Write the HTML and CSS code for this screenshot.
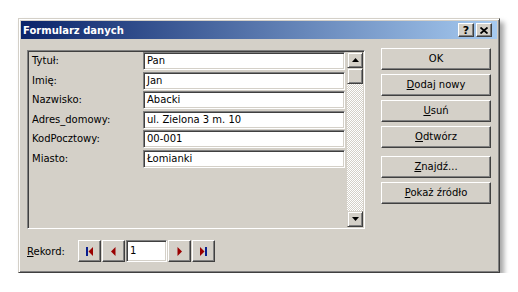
FILE: index.html
```html
<!DOCTYPE html>
<html lang="pl">
<head>
  <meta charset="UTF-8" />
  <title>Formularz danych</title>
  <link rel="stylesheet" href="styles.css">
</head>
<body>
  <div class="dialog">
    <div class="titlebar">
      <span class="title">Formularz danych</span>
      <div class="caption-buttons">
        <span class="cap-btn">?</span>
        <span class="cap-btn">
          <svg width="8" height="7" viewBox="0 0 8 7"><path d="M0.5 0.5 L7.5 6.5 M7.5 0.5 L0.5 6.5" stroke="#000" stroke-width="1.8"/></svg>
        </span>
      </div>
    </div>

    <div class="content">
      <div class="main">
        <div class="panel">
          <div class="fields">
            <div class="row"><span class="label">Tytuł:</span><div class="textbox">Pan</div></div>
            <div class="row"><span class="label">Imię:</span><div class="textbox">Jan</div></div>
            <div class="row"><span class="label">Nazwisko:</span><div class="textbox">Abacki</div></div>
            <div class="row"><span class="label">Adres_domowy:</span><div class="textbox">ul. Zielona 3 m. 10</div></div>
            <div class="row"><span class="label">KodPocztowy:</span><div class="textbox">00-001</div></div>
            <div class="row"><span class="label">Miasto:</span><div class="textbox">Łomianki</div></div>
          </div>
          <div class="scrollbar">
            <div class="sb-btn"><svg width="7" height="4" viewBox="0 0 7 4"><path d="M3.5 0 L7 4 L0 4 Z" fill="#000"/></svg></div>
            <div class="sb-btn thumb"></div>
            <div class="sb-track"></div>
            <div class="sb-btn"><svg width="7" height="4" viewBox="0 0 7 4"><path d="M0 0 L7 0 L3.5 4 Z" fill="#000"/></svg></div>
          </div>
        </div>

        <div class="buttons">
          <div class="btn">OK</div>
          <div class="btn"><u>D</u>odaj nowy</div>
          <div class="btn"><u>U</u>suń</div>
          <div class="btn"><u>O</u>dtwórz</div>
          <div class="btn sep"><u>Z</u>najdź...</div>
          <div class="btn"><u>P</u>okaż źródło</div>
        </div>
      </div>

      <div class="nav">
        <span class="nav-label"><u>R</u>ekord:</span>
        <div class="nav-btn">
          <svg width="9" height="9" viewBox="0 0 9 9"><rect x="1" y="0" width="2" height="9" fill="#0a1f8f"/><path d="M8 0 L8 9 L3.5 4.5 Z" fill="#9a0000"/></svg>
        </div>
        <div class="nav-btn">
          <svg width="9" height="9" viewBox="0 0 9 9"><path d="M6.5 0 L6.5 9 L2 4.5 Z" fill="#9a0000"/></svg>
        </div>
        <div class="nav-box">1</div>
        <div class="nav-btn">
          <svg width="9" height="9" viewBox="0 0 9 9"><path d="M2.5 0 L2.5 9 L7 4.5 Z" fill="#9a0000"/></svg>
        </div>
        <div class="nav-btn">
          <svg width="9" height="9" viewBox="0 0 9 9"><path d="M1 0 L1 9 L5.5 4.5 Z" fill="#9a0000"/><rect x="6" y="0" width="2" height="9" fill="#0a1f8f"/></svg>
        </div>
      </div>
    </div>
  </div>
</body>
</html>
```

FILE: styles.css
```css
* {
  box-sizing: border-box;
}
body {
  margin: 0;
  background: #fff;
  font-family: "DejaVu Sans", Tahoma, sans-serif;
  font-size: 10px;
  color: #000;
}
.dialog {
  margin: 18px 0 0 18px;
  width: 482px;
  height: 255px;
  padding: 2px;
  background: #d4d0c8;
  border: 1px solid;
  border-color: #d4d0c8 #404040 #404040 #d4d0c8;
  box-shadow: inset 1px 1px #fff, inset -1px -1px #808080, 4px 4px 5px rgba(0,0,0,0.35);
}
.titlebar {
  height: 18px;
  display: flex;
  align-items: center;
  justify-content: space-between;
  padding: 0 5px 0 2px;
  background: linear-gradient(to right, #0a246a, #a6caf0);
  color: #fff;
  font-weight: bold;
}
.caption-buttons {
  display: flex;
  gap: 2px;
}
.cap-btn {
  width: 16px;
  height: 14px;
  display: flex;
  align-items: center;
  justify-content: center;
  background: #d4d0c8;
  color: #000;
  font-size: 11px;
  font-weight: bold;
  border: 1px solid;
  border-color: #fff #404040 #404040 #fff;
  box-shadow: inset -1px -1px #808080;
}
.content {
  padding: 11px 0 0 6px;
}
.main {
  display: flex;
  align-items: flex-start;
}
.panel {
  width: 338px;
  height: 179px;
  display: flex;
  padding: 1px;
  border: 1px solid;
  border-color: #808080 #fff #fff #808080;
  box-shadow: inset 1px 1px #404040, inset -1px -1px #d4d0c8;
}
.fields {
  flex: 1;
  display: grid;
  grid-auto-rows: 19.6px;
  align-content: start;
}
.row {
  display: flex;
  align-items: flex-start;
}
.label {
  width: 114px;
  padding-left: 3px;
  line-height: 18px;
}
.textbox {
  width: 202px;
  height: 18px;
  padding: 0 3px;
  line-height: 16px;
  background: #fff;
  border: 1px solid;
  border-color: #808080 #fff #fff #808080;
  box-shadow: inset 1px 1px #404040, inset -1px -1px #d4d0c8;
}
.scrollbar {
  width: 16px;
  display: flex;
  flex-direction: column;
}
.sb-btn {
  height: 16px;
  display: flex;
  align-items: center;
  justify-content: center;
  background: #d4d0c8;
  border: 1px solid;
  border-color: #d4d0c8 #404040 #404040 #d4d0c8;
  box-shadow: inset 1px 1px #fff, inset -1px -1px #808080;
}
.sb-track {
  flex: 1;
  background: repeating-conic-gradient(#fff 0 25%, #d4d0c8 0 50%) 0 0 / 2px 2px;
}
.buttons {
  width: 110px;
  margin: -2px 0 0 16px;
  display: flex;
  flex-direction: column;
  gap: 4px;
}
.btn {
  height: 22px;
  line-height: 20px;
  text-align: center;
  border: 1px solid;
  border-color: #fff #404040 #404040 #fff;
  box-shadow: inset -1px -1px #808080;
}
.btn.sep {
  margin-top: 4px;
}
.nav {
  margin-top: 11px;
  display: flex;
  align-items: center;
  gap: 1px;
}
.nav-label {
  width: 50px;
}
.nav-btn {
  width: 23px;
  height: 22px;
  display: flex;
  align-items: center;
  justify-content: center;
  border: 1px solid;
  border-color: #fff #404040 #404040 #fff;
  box-shadow: inset -1px -1px #808080;
}
.nav-box {
  width: 41px;
  height: 22px;
  padding: 0 3px;
  line-height: 20px;
  background: #fff;
  border: 1px solid;
  border-color: #808080 #fff #fff #808080;
  box-shadow: inset 1px 1px #404040, inset -1px -1px #d4d0c8;
}
```
